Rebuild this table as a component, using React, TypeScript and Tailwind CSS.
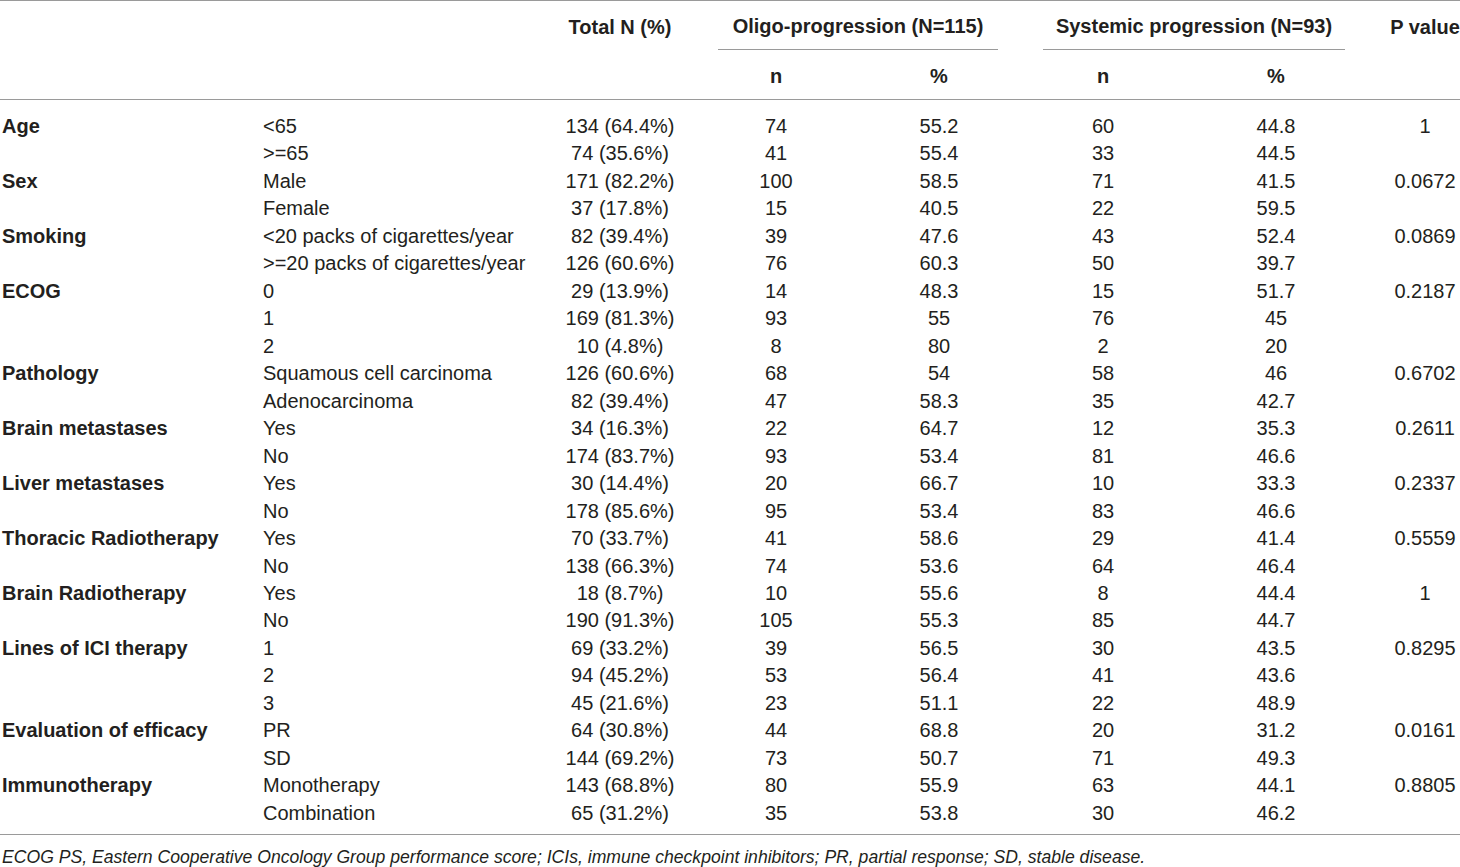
const groups: { label: string; rows: [string, string, string, string, string, string][]; p: string }[] = [
  { label: "Age", p: "1", rows: [["<65", "134 (64.4%)", "74", "55.2", "60", "44.8"], [">=65", "74 (35.6%)", "41", "55.4", "33", "44.5"]] },
  { label: "Sex", p: "0.0672", rows: [["Male", "171 (82.2%)", "100", "58.5", "71", "41.5"], ["Female", "37 (17.8%)", "15", "40.5", "22", "59.5"]] },
  { label: "Smoking", p: "0.0869", rows: [["<20 packs of cigarettes/year", "82 (39.4%)", "39", "47.6", "43", "52.4"], [">=20 packs of cigarettes/year", "126 (60.6%)", "76", "60.3", "50", "39.7"]] },
  { label: "ECOG", p: "0.2187", rows: [["0", "29 (13.9%)", "14", "48.3", "15", "51.7"], ["1", "169 (81.3%)", "93", "55", "76", "45"], ["2", "10 (4.8%)", "8", "80", "2", "20"]] },
  { label: "Pathology", p: "0.6702", rows: [["Squamous cell carcinoma", "126 (60.6%)", "68", "54", "58", "46"], ["Adenocarcinoma", "82 (39.4%)", "47", "58.3", "35", "42.7"]] },
  { label: "Brain metastases", p: "0.2611", rows: [["Yes", "34 (16.3%)", "22", "64.7", "12", "35.3"], ["No", "174 (83.7%)", "93", "53.4", "81", "46.6"]] },
  { label: "Liver metastases", p: "0.2337", rows: [["Yes", "30 (14.4%)", "20", "66.7", "10", "33.3"], ["No", "178 (85.6%)", "95", "53.4", "83", "46.6"]] },
  { label: "Thoracic Radiotherapy", p: "0.5559", rows: [["Yes", "70 (33.7%)", "41", "58.6", "29", "41.4"], ["No", "138 (66.3%)", "74", "53.6", "64", "46.4"]] },
  { label: "Brain Radiotherapy", p: "1", rows: [["Yes", "18 (8.7%)", "10", "55.6", "8", "44.4"], ["No", "190 (91.3%)", "105", "55.3", "85", "44.7"]] },
  { label: "Lines of ICI therapy", p: "0.8295", rows: [["1", "69 (33.2%)", "39", "56.5", "30", "43.5"], ["2", "94 (45.2%)", "53", "56.4", "41", "43.6"], ["3", "45 (21.6%)", "23", "51.1", "22", "48.9"]] },
  { label: "Evaluation of efficacy", p: "0.0161", rows: [["PR", "64 (30.8%)", "44", "68.8", "20", "31.2"], ["SD", "144 (69.2%)", "73", "50.7", "71", "49.3"]] },
  { label: "Immunotherapy", p: "0.8805", rows: [["Monotherapy", "143 (68.8%)", "80", "55.9", "63", "44.1"], ["Combination", "65 (31.2%)", "35", "53.8", "30", "46.2"]] },
];

const cols = "grid grid-cols-[263px_297px_120px_192px_134px_194px_152px_108px]";

export default function App() {
  return (
    <div className="w-[1460px] h-[867px] bg-white text-[#231f20] text-[20px] leading-[27.5px] font-['Liberation_Sans',Arial,sans-serif] overflow-hidden">
      <div className="border-t border-[#9a9a9a]">
        <div className={`${cols} h-[49px] items-center font-bold`}>
          <div />
          <div />
          <div className="text-center pt-[4px]">Total N (%)</div>
          <div className="col-span-2 ml-[38px] mr-[8px] h-full pt-[4px] flex items-center justify-center border-b border-[#9a9a9a]">
            Oligo-progression (N=115)
          </div>
          <div className="col-span-2 ml-[37px] mr-[7px] h-full pt-[4px] flex items-center justify-center border-b border-[#9a9a9a]">
            Systemic progression (N=93)
          </div>
          <div className="pl-[38px] pt-[4px] text-center">P value</div>
        </div>
        <div className={`${cols} h-[50px] pt-[4px] items-center font-bold border-b border-[#9a9a9a]`}>
          <div />
          <div />
          <div />
          <div className="text-center">n</div>
          <div className="text-center">%</div>
          <div className="text-center">n</div>
          <div className="text-center">%</div>
          <div />
        </div>
      </div>

      <div className="pt-[13px] pb-[7px] border-b border-[#9a9a9a]">
        {groups.map((g) =>
          g.rows.map((r, i) => (
            <div key={g.label + i} className={`${cols} h-[27.48px] items-center`}>
              <div className="pl-[2px] font-bold">{i === 0 ? g.label : ""}</div>
              <div>{r[0]}</div>
              <div className="text-center">{r[1]}</div>
              <div className="text-center">{r[2]}</div>
              <div className="text-center">{r[3]}</div>
              <div className="text-center">{r[4]}</div>
              <div className="text-center">{r[5]}</div>
              <div className="pl-[38px] text-center">{i === 0 ? g.p : ""}</div>
            </div>
          ))
        )}
      </div>

      <div className="pt-[11px] pl-[2px] italic text-[17.6px] leading-[22px]">
        ECOG PS, Eastern Cooperative Oncology Group performance score; ICIs, immune checkpoint inhibitors; PR, partial response; SD, stable disease.
      </div>
    </div>
  );
}
